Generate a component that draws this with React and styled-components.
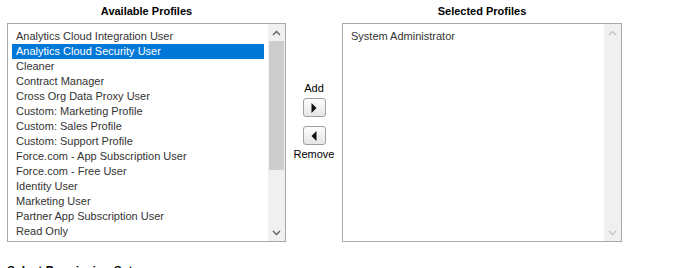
import React, { useState } from 'react';
import styled, { createGlobalStyle } from 'styled-components';

const GlobalStyle = createGlobalStyle`
  body {
    margin: 0;
    background: #fff;
    font-family: Arial, "Liberation Sans", sans-serif;
  }
`;

const available = [
  'Analytics Cloud Integration User',
  'Analytics Cloud Security User',
  'Cleaner',
  'Contract Manager',
  'Cross Org Data Proxy User',
  'Custom: Marketing Profile',
  'Custom: Sales Profile',
  'Custom: Support Profile',
  'Force.com - App Subscription User',
  'Force.com - Free User',
  'Identity User',
  'Marketing User',
  'Partner App Subscription User',
  'Read Only',
];

const selected = ['System Administrator'];

const Page = styled.div`
  padding: 4px 0 0 7px;
`;

const Picker = styled.div`
  display: grid;
  grid-template-columns: 279px 56px 280px;
  grid-template-rows: 19px 219px;
`;

const Heading = styled.div`
  font-family: Arial, "Liberation Sans", sans-serif;
  font-size: 11px;
  font-weight: bold;
  color: #000;
  text-align: center;
  line-height: 14px;
`;

const Box = styled.div`
  display: flex;
  border: 1px solid #a9a9a9;
  background: #fff;
  box-sizing: border-box;
  height: 219px;
  overflow: hidden;
`;

const List = styled.ul`
  flex: 1;
  list-style: none;
  margin: 0;
  padding: 5px 4px 0 4px;
`;

const Item = styled.li`
  height: 15px;
  line-height: 13px;
  font-size: 11px;
  padding: 0 3px;
  box-sizing: border-box;
  white-space: nowrap;
  color: ${p => (p.$active ? '#fff' : '#333')};
  background: ${p => (p.$active ? '#0078d7' : 'transparent')};
  border: 1px dotted ${p => (p.$active ? '#fff' : 'transparent')};
  outline: ${p => (p.$active ? '1px solid #0078d7' : 'none')};
  outline-offset: -1px;
  cursor: default;
`;

const Scrollbar = styled.div`
  width: 17px;
  display: flex;
  flex-direction: column;
  background: #f0f0f0;
`;

const Arrow = styled.div`
  height: 17px;
  display: flex;
  align-items: center;
  justify-content: center;
  color: ${p => (p.$disabled ? '#c4c4c4' : '#606060')};
`;

const Track = styled.div`
  flex: 1;
  display: flex;
  flex-direction: column;
`;

const Thumb = styled.div`
  height: 129px;
  margin: 0 1px;
  background: #cdcdcd;
`;

const Middle = styled.div`
  display: flex;
  flex-direction: column;
  align-items: center;
  padding-top: 59px;
  font-size: 11px;
  color: #000;
`;

const Label = styled.div`
  line-height: 13px;
  margin: ${p => (p.$top ? '0 0 3px' : '3px 0 0')};
`;

const MoveButton = styled.button`
  width: 23px;
  height: 19px;
  margin: ${p => (p.$second ? '9px 0 0' : '0')};
  padding: 0;
  display: flex;
  align-items: center;
  justify-content: center;
  border: 1px solid #a0a0a0;
  border-radius: 3px;
  background: linear-gradient(#fdfdfd, #e6e6e6);
  cursor: pointer;
`;

const Footer = styled.div`
  margin-top: 22px;
  font-size: 12px;
  font-weight: bold;
  color: #000;
`;

const Chevron = ({ up }) => (
  <svg width="9" height="6" viewBox="0 0 9 6">
    <path d={up ? 'M1 5 L4.5 1.5 L8 5' : 'M1 1 L4.5 4.5 L8 1'} fill="none" stroke="currentColor" strokeWidth="1.4" />
  </svg>
);

const Tri = ({ left }) => (
  <svg width="6" height="10" viewBox="0 0 6 10">
    <path d={left ? 'M5.5 0 L0.5 5 L5.5 10 Z' : 'M0.5 0 L5.5 5 L0.5 10 Z'} fill="#111" />
  </svg>
);

const ListBox = ({ items, active, scrollable, onPick }) => (
  <Box>
    <List>
      {items.map(item => (
        <Item key={item} $active={item === active} onClick={() => onPick(item)}>{item}</Item>
      ))}
    </List>
    <Scrollbar>
      <Arrow $disabled={!scrollable}><Chevron up /></Arrow>
      <Track>{scrollable && <Thumb />}</Track>
      <Arrow $disabled={!scrollable}><Chevron /></Arrow>
    </Scrollbar>
  </Box>
);

const App = () => {
  const [activeLeft, setActiveLeft] = useState('Analytics Cloud Security User');
  const [activeRight, setActiveRight] = useState(null);

  return (
    <Page>
      <GlobalStyle />
      <Picker>
        <Heading>Available Profiles</Heading>
        <div />
        <Heading>Selected Profiles</Heading>
        <ListBox items={available} active={activeLeft} scrollable onPick={setActiveLeft} />
        <Middle>
          <Label $top>Add</Label>
          <MoveButton title="Add"><Tri /></MoveButton>
          <MoveButton title="Remove" $second><Tri left /></MoveButton>
          <Label>Remove</Label>
        </Middle>
        <ListBox items={selected} active={activeRight} onPick={setActiveRight} />
      </Picker>
      <Footer>Select Permission Sets</Footer>
    </Page>
  );
};

export default App;
